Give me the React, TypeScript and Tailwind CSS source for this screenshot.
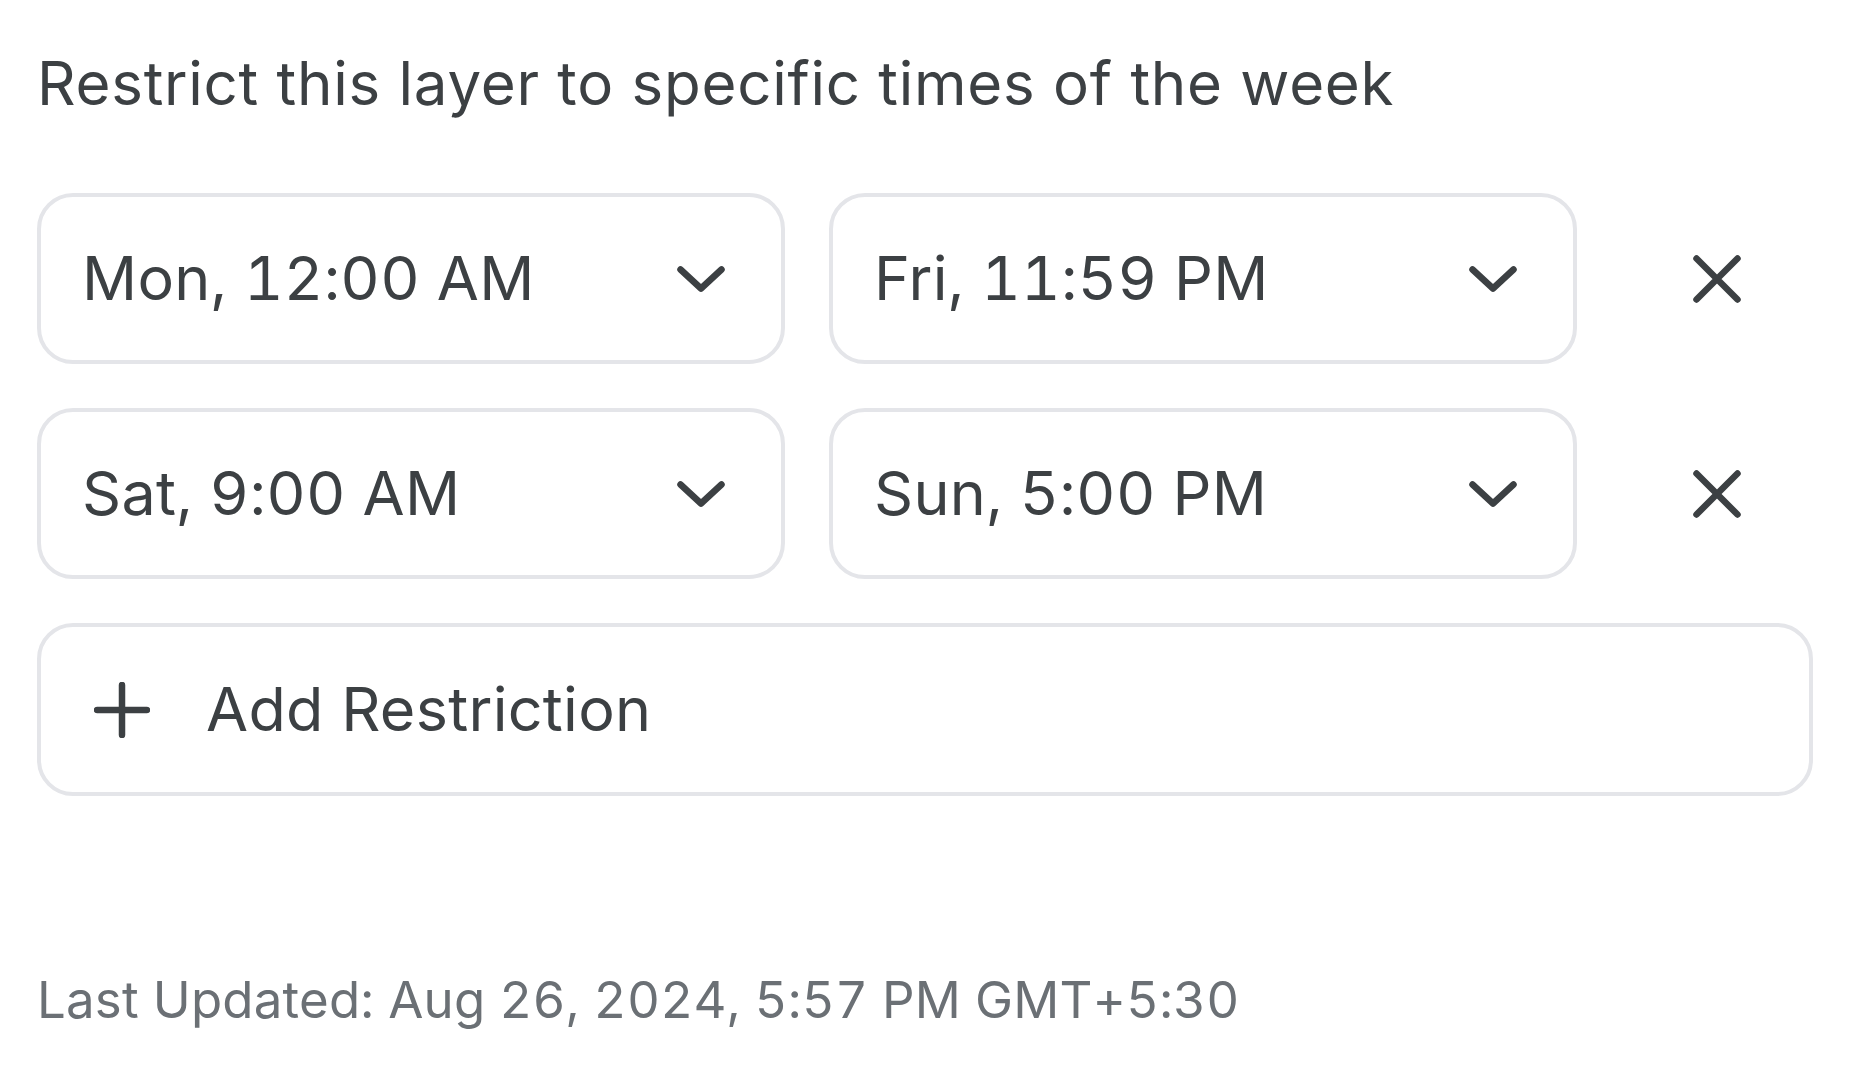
import React from "react";

function Chevron() {
  return (
    <svg width="48" height="26" viewBox="0 0 48 26" fill="none" className="shrink-0">
      <path d="M3.5 3.5 L24 22.5 L44.5 3.5" stroke="#3c4043" strokeWidth="6.5" strokeLinecap="round" strokeLinejoin="round" />
    </svg>
  );
}

function XIcon() {
  return (
    <svg width="48" height="48" viewBox="0 0 48 48" fill="none">
      <path d="M3.5 3.5 L44.5 44.5 M44.5 3.5 L3.5 44.5" stroke="#3c4043" strokeWidth="6.5" strokeLinecap="round" />
    </svg>
  );
}

function PlusIcon() {
  return (
    <svg width="56" height="56" viewBox="0 0 56 56" fill="none" className="shrink-0">
      <path d="M28 3 L28 53 M3 28 L53 28" stroke="#3c4043" strokeWidth="6.5" strokeLinecap="round" />
    </svg>
  );
}

function Select({ label }: { label: string }) {
  return (
    <div className="h-[171px] rounded-[36px] border-[4px] border-[#e4e5e9] bg-white flex items-center justify-between pl-[41px] pr-[56px]">
      <span className="text-[61px] text-[#3c4043] whitespace-nowrap tabular-nums tracking-[0.3px]">{label}</span>
      <Chevron />
    </div>
  );
}

function Row({ from, to }: { from: string; to: string }) {
  return (
    <div className="grid grid-cols-[748px_748px_192px] gap-x-[44px] items-center">
      <Select label={from} />
      <Select label={to} />
      <div className="flex items-center justify-center">
        <XIcon />
      </div>
    </div>
  );
}

export default function App() {
  return (
    <div className="w-[1852px] h-[1080px] bg-white pl-[37px] pt-[47px] font-['Inter','Roboto',sans-serif] overflow-hidden">
      <p className="text-[60px] leading-[72px] text-[#3c4043] whitespace-nowrap tracking-[0.75px]">
        Restrict this layer to specific times of the week
      </p>
      <div className="mt-[74px] w-[1776px] flex flex-col gap-[44px]">
        <Row from="Mon, 12:00 AM" to="Fri, 11:59 PM" />
        <Row from="Sat, 9:00 AM" to="Sun, 5:00 PM" />
        <div className="h-[173px] rounded-[36px] border-[4px] border-[#e4e5e9] bg-white flex items-center pl-[53px] gap-[56px]">
          <PlusIcon />
          <span className="text-[61px] text-[#3c4043] whitespace-nowrap tracking-[0.3px]">Add Restriction</span>
        </div>
      </div>
      <p className="mt-[166px] text-[51px] text-[#6b7075] whitespace-nowrap tabular-nums tracking-[0.2px]">
        Last Updated: Aug 26, 2024, 5:57 PM GMT+5:30
      </p>
    </div>
  );
}
